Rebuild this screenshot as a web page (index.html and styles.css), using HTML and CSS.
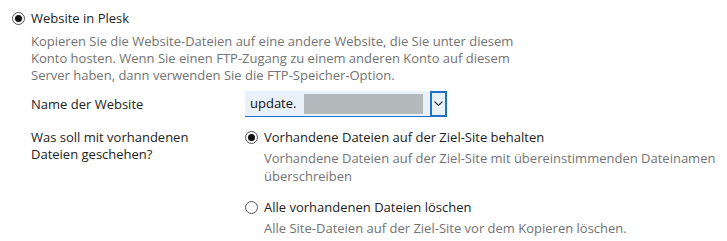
FILE: index.html
```html
<!DOCTYPE html>
<html lang="de">
<head>
<meta charset="utf-8">
<link rel="stylesheet" href="styles.css">
</head>
<body>
<div class="form">
  <div class="option">
    <label class="radio-line">
      <span class="radio checked"></span>
      <span class="radio-text">Website in Plesk</span>
    </label>
    <div class="desc desc-wide">Kopieren Sie die Website-Dateien auf eine andere Website, die Sie unter diesem Konto hosten. Wenn Sie einen FTP-Zugang zu einem anderen Konto auf diesem Server haben, dann verwenden Sie die FTP-Speicher-Option.</div>
  </div>

  <div class="row row-select">
    <div class="label">Name der Website</div>
    <div class="select">
      <span class="select-value">update.</span>
      <span class="redacted"></span>
      <span class="select-btn">
        <svg width="9" height="5" viewBox="0 0 9 5"><path d="M0.5 0.5 L4.5 4.5 L8.5 0.5" fill="none" stroke="#333" stroke-width="1.1"/></svg>
      </span>
    </div>
  </div>

  <div class="row row-files">
    <div class="label">Was soll mit vorhandenen Dateien geschehen?</div>
    <div class="choices">
      <div class="choice">
        <label class="radio-line">
          <span class="radio checked"></span>
          <span class="radio-text">Vorhandene Dateien auf der Ziel-Site behalten</span>
        </label>
        <div class="desc">Vorhandene Dateien auf der Ziel-Site mit übereinstimmenden Dateinamen überschreiben</div>
      </div>
      <div class="choice">
        <label class="radio-line">
          <span class="radio"></span>
          <span class="radio-text">Alle vorhandenen Dateien löschen</span>
        </label>
        <div class="desc">Alle Site-Dateien auf der Ziel-Site vor dem Kopieren löschen.</div>
      </div>
    </div>
  </div>
</div>
</body>
</html>
```

FILE: styles.css
```css
html, body {
  margin: 0;
  padding: 0;
  background: #ffffff;
}
body {
  font-family: "Open Sans", "Noto Sans", sans-serif;
  font-size: 13px;
  line-height: 17px;
  color: #222222;
}
.form {
  padding: 10px 0 0 12px;
}
.radio-line {
  display: flex;
  align-items: center;
  gap: 6px;
}
.radio {
  box-sizing: border-box;
  width: 13px;
  height: 13px;
  border: 1px solid #555;
  border-radius: 50%;
  position: relative;
  flex: none;
}
.radio.checked::after {
  content: "";
  position: absolute;
  left: 2px;
  top: 2px;
  width: 7px;
  height: 7px;
  border-radius: 50%;
  background: #111;
}
.desc {
  color: #737373;
  margin-left: 19px;
  margin-top: 6px;
}
.desc-wide {
  width: 486px;
}
.row {
  display: grid;
  grid-template-columns: 214px 1fr;
  margin-left: 19px;
}
.row-select {
  margin-top: 7px;
  align-items: center;
  height: 26px;
}
.select {
  box-sizing: border-box;
  width: 202px;
  height: 26px;
  background: #e9f2fa;
  border-bottom: 1px solid #1e73c8;
  display: flex;
  align-items: center;
  padding-left: 5px;
}
.select-value {
  color: #111;
}
.redacted {
  width: 119px;
  height: 20px;
  background: #b4b9bc;
  margin-left: 8px;
}
.select-btn {
  box-sizing: border-box;
  margin-left: auto;
  width: 17px;
  height: 26px;
  border: 2px solid #1e73c8;
  background: #e9f2fa;
  display: flex;
  align-items: center;
  justify-content: center;
}
.row-files {
  margin-top: 12px;
}
.row-files .label {
  width: 170px;
}
.choices {
  display: flex;
  flex-direction: column;
  gap: 14px;
}
.choice .desc {
  margin-top: 3px;
  line-height: 18px;
}
```
